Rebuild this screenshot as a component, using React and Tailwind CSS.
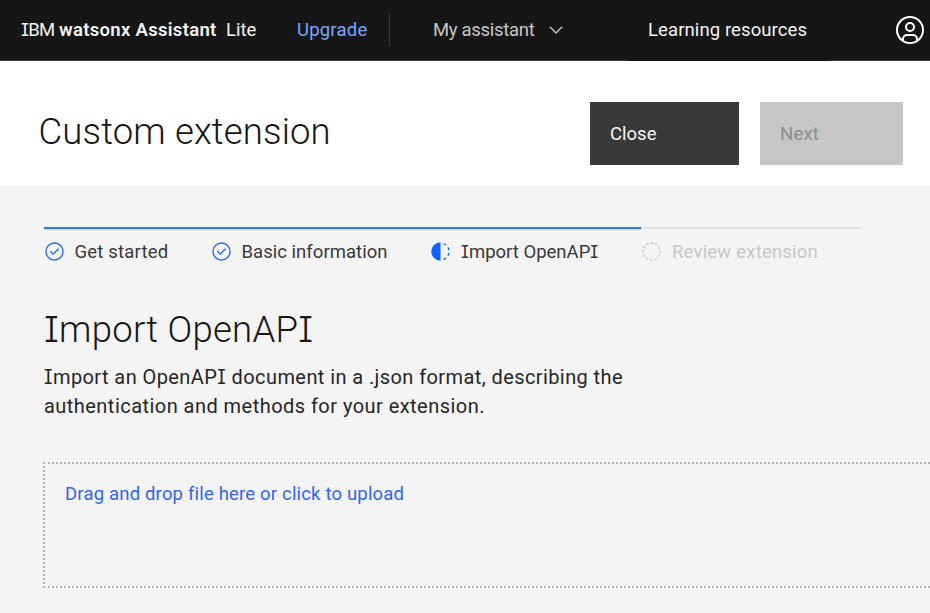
import { Fragment } from "react";

// Renders a label whose capital I carries serifs.
function Label({ children }) {
  return children.split("I").map((part, i) => (
    <Fragment key={i}>
      {i > 0 && (
        <span className="font-['Inter'] text-[0.97em] [font-feature-settings:'cv08']">I</span>
      )}
      {part}
    </Fragment>
  ));
}

function CheckmarkOutline() {
  return (
    <svg viewBox="0 0 32 32" className="-ml-[0.5px] mb-[2px] size-[21px] shrink-0 fill-[#1f66f5]">
      <path d="M14 21.414L9 16.413 10.413 15 14 18.586 21.585 11 23 12.415z" />
      <path d="M16,2A14,14,0,1,0,30,16,14,14,0,0,0,16,2Zm0,26A12,12,0,1,1,28,16,12,12,0,0,1,16,28Z" />
    </svg>
  );
}

function Incomplete() {
  return (
    <svg viewBox="0 0 32 32" className="mb-[2px] size-[21px] shrink-0 fill-[#0f62fe]">
      <path d="M23.7642 6.8593l1.2851-1.5315A13.976 13.976 0 0020.8672 2.887l-.6836 1.8776A11.9729 11.9729 0 0123.7642 6.8593z" />
      <path d="M27.81 14l1.9677-.4128A13.8888 13.8888 0 0028.14 9.0457L26.4087 10A12.52 12.52 0 0127.81 14z" />
      <path d="M20.1836 27.2354l.6836 1.8776a13.976 13.976 0 004.1821-2.4408l-1.2851-1.5315A11.9729 11.9729 0 0120.1836 27.2354z" />
      <path d="M26.4087 22L28.14 23a14.14 14.14 0 001.6382-4.5872L27.81 18.0659A12.1519 12.1519 0 0126.4087 22z" />
      <path d="M16 30V2a14 14 0 000 28z" />
    </svg>
  );
}

function CircleDash() {
  return (
    <svg viewBox="0 0 32 32" className="mb-[2px] size-[21px] shrink-0 fill-none stroke-[#c6c6c6]">
      <circle cx="16" cy="16" r="13" strokeWidth="2" strokeDasharray="4 2.807" strokeDashoffset="2" />
    </svg>
  );
}

function UserAvatar() {
  return (
    <svg viewBox="0 0 32 32" className="size-8 shrink-0 fill-white">
      <path d="M16,8a5,5,0,1,0,5,5A5,5,0,0,0,16,8Zm0,8a3,3,0,1,1,3-3A3.0034,3.0034,0,0,1,16,16Z" />
      <path d="M16,2A14,14,0,1,0,30,16,14.0158,14.0158,0,0,0,16,2ZM10,26.3765V25a3.0033,3.0033,0,0,1,3-3h6a3.0033,3.0033,0,0,1,3,3v1.3765a11.8989,11.8989,0,0,1-12,0Zm13.9925-1.4507A5.0016,5.0016,0,0,0,19,20H13a5.0016,5.0016,0,0,0-4.9925,4.9258,12,12,0,1,1,15.985,0Z" />
    </svg>
  );
}

function Header() {
  return (
    <header className="flex h-[61px] items-center whitespace-nowrap border-b border-[#393939] bg-[#161616] text-[18.5px] text-[#f4f4f4]">
      <div className="flex w-[276px] shrink-0 pl-[21px] pt-0.5">
        <span className="w-[38px] tracking-[-0.7px]"><Label>IBM</Label></span>
        <span className="w-[167px] font-semibold tracking-[0.3px]">watsonx Assistant</span>
        <span>Lite</span>
      </div>
      <a className="w-[113px] shrink-0 pl-[21px] pt-0.5 tracking-[0.2px] text-[#78a9ff]">Upgrade</a>
      <div className="h-8 w-px bg-[#393939]" />
      <div className="flex w-[238px] shrink-0 items-center pl-[43px] text-[#c6c6c6]">
        <span className="w-[116px] pt-0.5 tracking-[-0.3px]">My assistant</span>
        <svg viewBox="0 0 14 8" className="h-2 w-3.5 fill-none stroke-[#c6c6c6]">
          <path d="M0.8 0.8L7 7L13.2 0.8" strokeWidth="1.4" />
        </svg>
      </div>
      <a className="-mb-px flex h-[61px] w-[201px] shrink-0 items-center bg-[#161616] pl-5 pt-px tracking-[0.1px]">Learning resources</a>
      <div className="flex grow justify-end pr-1"><UserAvatar /></div>
    </header>
  );
}

function TitleBar() {
  return (
    <section className="flex h-[125px] items-start bg-white">
      <h1 className="w-[590px] shrink-0 pl-[38.5px] pt-[47px] text-[36.5px] font-[350] leading-[48px] tracking-[0.15px] text-[#161616]">Custom extension</h1>
      <div className="mt-[41px] flex gap-[21px] text-[18.5px]">
        <button className="flex h-[63px] w-[149px] items-center bg-[#393939] pl-5 pt-[3px] text-[#f4f4f4]">Close</button>
        <button className="flex h-[63px] w-[143px] items-center bg-[#c6c6c6] pl-5 pt-[3px] tracking-[0.2px] text-[#8d8d8d]">Next</button>
      </div>
    </section>
  );
}

function Stepper() {
  return (
    <div className="w-[816px]">
      <div className="flex h-[3px]">
        <div className="w-[597px] border-b border-[#b5d3fb] bg-[#3f74d8]" />
        <div className="h-0.5 grow bg-[#e0e0e0]" />
      </div>
      <ol className="flex whitespace-nowrap pt-[10px] text-[18.5px] leading-[24px] text-[#393939]">
        <li className="flex w-[167px] items-center gap-[10px]"><CheckmarkOutline /><span className="tracking-[0.2px]">Get started</span></li>
        <li className="flex w-[219px] items-center gap-[10px]"><CheckmarkOutline /><span className="tracking-[0.03px]">Basic information</span></li>
        <li className="flex w-[211px] items-center gap-[10px]"><Incomplete /><span><Label>Import OpenAPI</Label></span></li>
        <li className="flex items-center gap-[10px] text-[#c6c6c6]"><CircleDash /><span className="tracking-[0.2px]">Review extension</span></li>
      </ol>
    </div>
  );
}

export default function App() {
  return (
    <div className="flex h-[613px] w-[930px] flex-col overflow-hidden bg-[#f4f4f4] font-['Roboto','Liberation_Sans',sans-serif]">
      <Header />
      <TitleBar />
      <main className="flex flex-col pl-11 pt-[41px] text-[#161616]">
        <Stepper />
        <h2 className="mt-[42px] text-[36.5px] font-[350] leading-[48px] tracking-[0.25px]"><Label>Import OpenAPI</Label></h2>
        <p className="mt-[9px] whitespace-nowrap text-[20px] leading-[29px] tracking-[0.46px] text-[#262626]">
          <span className="tracking-[0.41px]"><Label>Import an OpenAPI document in a .json format, describing the</Label></span>
          <br />
          authentication and methods for your extension.
        </p>
        <div className="-ml-px mt-[41px] h-[126px] border-2 border-r-0 border-dotted border-[#b4b4b4] pl-5 pt-[18px] text-[18.5px] leading-[24px] tracking-[0.18px] text-[#2f66f0]">
          Drag and drop file here or click to upload
        </div>
      </main>
    </div>
  );
}
